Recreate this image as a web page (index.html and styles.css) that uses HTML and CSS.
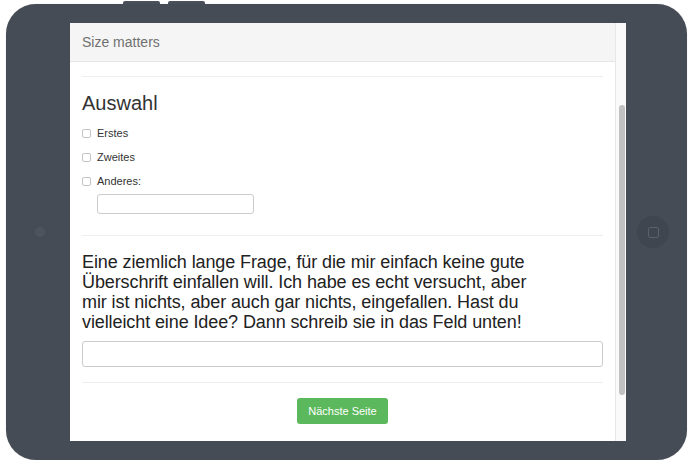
FILE: index.html
```html
<!DOCTYPE html>
<html lang="de">
<head>
    <meta charset="UTF-8">
    <meta name="viewport" content="width=device-width, initial-scale=1.0">
    <title>Size matters</title>
    <link rel="stylesheet" href="styles.css">
</head>
<body>
    <!-- Knöpfe oben am Gerät -->
    <div class="top-buttons">
        <span class="hw-button"></span>
        <span class="hw-button"></span>
    </div>

    <div class="tablet">
        <span class="camera"></span>
        <span class="home-button"><span class="home-square"></span></span>

        <div class="screen">
            <div class="page">
                <div class="panel-heading">Size matters</div>

                <div class="content">
                    <hr class="divider">

                    <h2 class="question-title">Auswahl</h2>
                    <label class="check-row"><input type="checkbox" class="check"> Erstes</label>
                    <label class="check-row"><input type="checkbox" class="check"> Zweites</label>
                    <label class="check-row"><input type="checkbox" class="check"> Anderes:</label>
                    <input type="text" class="other-input">

                    <hr class="divider gap">

                    <h2 class="question-long">Eine ziemlich lange Frage, für die mir einfach keine gute Überschrift einfallen will. Ich habe es echt versucht, aber mir ist nichts, aber auch gar nichts, eingefallen. Hast du vielleicht eine Idee? Dann schreib sie in das Feld unten!</h2>
                    <input type="text" class="answer-input">

                    <hr class="divider bottom">

                    <div class="actions">
                        <button class="next-button">Nächste Seite</button>
                    </div>
                </div>
            </div>

            <!-- Scrollleiste -->
            <div class="scrollbar">
                <div class="scroll-thumb"></div>
            </div>
        </div>
    </div>
</body>
</html>
```

FILE: styles.css
```css
body {
    margin: 0;
    padding: 0;
    background-color: #ffffff;
    font-family: "Liberation Sans", Arial, sans-serif;
    color: #333;
}

/* Knöpfe oben */
.top-buttons {
    display: flex;
    gap: 8px;
    padding-left: 123px;
    height: 3px;
    margin-top: 1px;
}

.hw-button {
    width: 37px;
    height: 3px;
    background-color: #4a515b;
    border-radius: 2px 2px 0 0;
}

/* Gerät */
.tablet {
    position: relative;
    box-sizing: border-box;
    width: 681px;
    height: 456px;
    margin-left: 6px;
    padding: 19px 61px 19px 64px;
    background-color: #454c56;
    border-radius: 30px;
    box-shadow: 0 0 1px rgba(0, 0, 0, 0.3);
}

.camera {
    position: absolute;
    left: 29px;
    top: 223px;
    width: 10px;
    height: 10px;
    border-radius: 50%;
    background-color: #4d545e;
}

.home-button {
    position: absolute;
    left: 631px;
    top: 212px;
    width: 32px;
    height: 32px;
    border-radius: 50%;
    background-color: #40464f;
    display: flex;
    align-items: center;
    justify-content: center;
}

.home-square {
    width: 9px;
    height: 9px;
    border: 1px solid #5a616b;
    border-radius: 2px;
}

/* Bildschirm */
.screen {
    display: flex;
    height: 418px;
    background-color: #ffffff;
    overflow: hidden;
}

.page {
    flex: 1;
}

.panel-heading {
    height: 38px;
    line-height: 38px;
    padding: 0 12px;
    background-color: #f5f5f5;
    border-bottom: 1px solid #e5e5e5;
    font-size: 14px;
    color: #707070;
}

.content {
    padding: 0 12px;
}

.divider {
    border: none;
    border-top: 1px solid #eeeeee;
    margin: 14px 0 0 0;
}

.divider.gap {
    margin-top: 21px;
}

.divider.bottom {
    margin-top: 15px;
}

.question-title {
    font-size: 20px;
    font-weight: normal;
    line-height: 22px;
    margin: 15px 0 7px 0;
}

.check-row {
    display: flex;
    align-items: center;
    height: 24px;
    font-size: 11px;
    color: #333;
}

.check {
    appearance: none;
    width: 9px;
    height: 9px;
    margin: 0 6px 0 0;
    border: 1px solid #c4c4c4;
    border-radius: 2px;
    background-color: #fff;
}

.other-input {
    display: block;
    box-sizing: border-box;
    width: 157px;
    height: 20px;
    margin: 1px 0 0 15px;
    border: 1px solid #cccccc;
    border-radius: 3px;
}

.question-long {
    max-width: 470px;
    font-size: 18px;
    font-weight: normal;
    line-height: 20px;
    letter-spacing: -0.1px;
    color: #222;
    margin: 16px 0 9px 0;
}

.answer-input {
    display: block;
    box-sizing: border-box;
    width: 100%;
    height: 26px;
    border: 1px solid #cccccc;
    border-radius: 3px;
}

.actions {
    display: flex;
    justify-content: center;
    padding-top: 15px;
}

.next-button {
    background-color: #5cb85c;
    color: #ffffff;
    border: none;
    border-radius: 3px;
    padding: 0 11px;
    height: 26px;
    font-family: "Liberation Sans", Arial, sans-serif;
    font-size: 11px;
}

/* Scrollleiste */
.scrollbar {
    width: 11px;
    background-color: #fafafa;
    border-left: 1px solid #e8e8e8;
    padding: 82px 0 0 3px;
    box-sizing: border-box;
}

.scroll-thumb {
    width: 6px;
    height: 290px;
    border-radius: 3px;
    background-color: #c1c1c1;
}
```
